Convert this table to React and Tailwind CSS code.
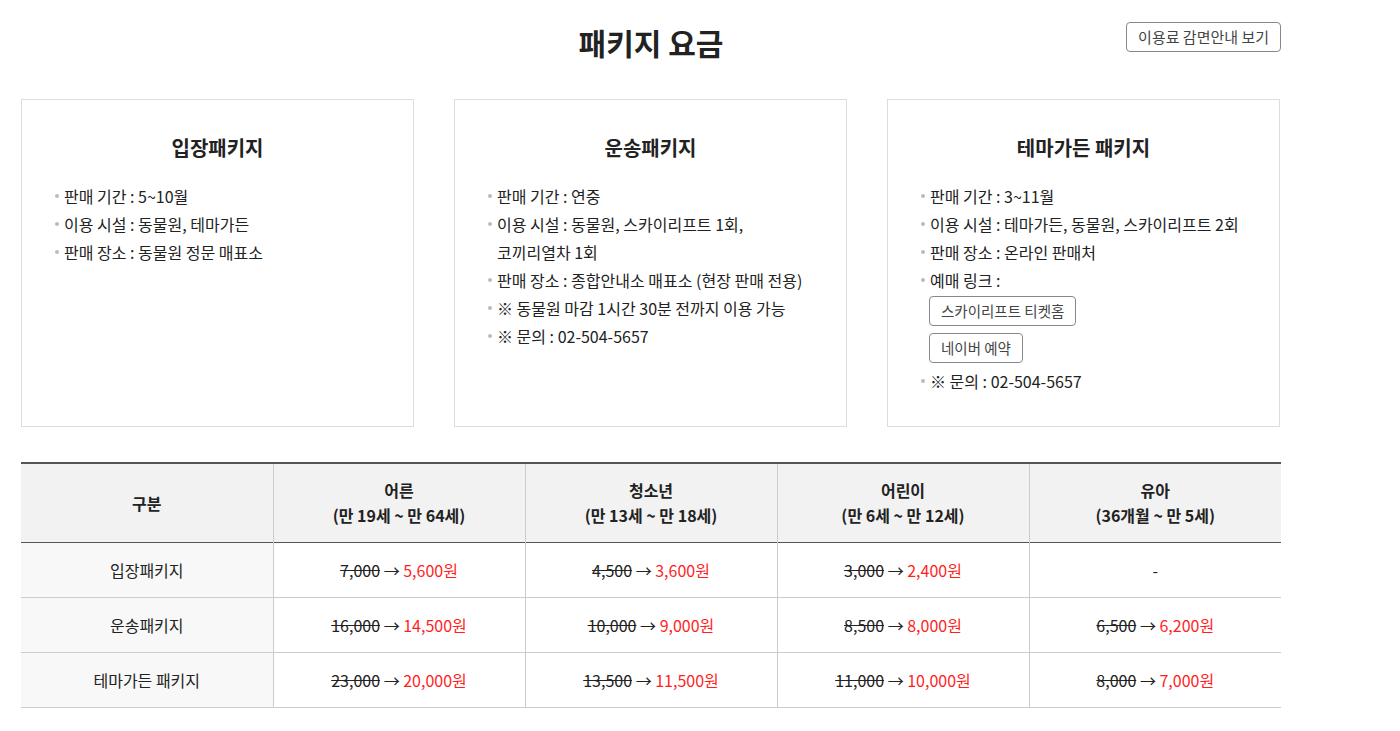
import React from 'react'

const packages = [
    {
        title: '입장패키지',
        items: ['판매 기간 : 5~10월', '이용 시설 : 동물원, 테마가든', '판매 장소 : 동물원 정문 매표소'],
    },
    {
        title: '운송패키지',
        items: [
            '판매 기간 : 연중',
            '이용 시설 : 동물원, 스카이리프트 1회, 코끼리열차 1회',
            '판매 장소 : 종합안내소 매표소 (현장 판매 전용)',
            '※ 동물원 마감 1시간 30분 전까지 이용 가능',
            '※ 문의 : 02-504-5657',
        ],
    },
    {
        title: '테마가든 패키지',
        items: ['판매 기간 : 3~11월', '이용 시설 : 테마가든, 동물원, 스카이리프트 2회', '판매 장소 : 온라인 판매처'],
        links: ['스카이리프트 티켓홈', '네이버 예약'],
        after: ['※ 문의 : 02-504-5657'],
    },
]

const rows = [
    { name: '입장패키지', prices: [['7,000', '5,600원'], ['4,500', '3,600원'], ['3,000', '2,400원'], null] },
    { name: '운송패키지', prices: [['16,000', '14,500원'], ['10,000', '9,000원'], ['8,500', '8,000원'], ['6,500', '6,200원']] },
    { name: '테마가든 패키지', prices: [['23,000', '20,000원'], ['13,500', '11,500원'], ['11,000', '10,000원'], ['8,000', '7,000원']] },
]

const heads = [
    ['어른', '(만 19세 ~ 만 64세)'],
    ['청소년', '(만 13세 ~ 만 18세)'],
    ['어린이', '(만 6세 ~ 만 12세)'],
    ['유아', '(36개월 ~ 만 5세)'],
]

function Item({ text }) {
    return (
        <li className="flex leading-[28px]">
            <span className="w-[9px] shrink-0 flex items-center h-[28px]">
                <span className="w-[4px] h-[4px] rounded-full bg-[#bbb]" />
            </span>
            <span className="break-keep">{text}</span>
        </li>
    )
}

function App() {
    return (
        <div className="min-h-screen bg-white text-[#222]" style={{ fontFamily: '"Noto Sans CJK KR", "Noto Sans", sans-serif' }}>
            <div className="w-[1260px] ml-[21px] pt-[22px] pb-10">
                {/* Header */}
                <div className="grid grid-cols-[1fr_auto_1fr] items-start">
                    <div />
                    <h1 className="text-[30px] font-bold leading-[40px]">패키지 요금</h1>
                    <div className="flex justify-end">
                        <button className="h-[30px] px-[11px] border border-[#888] rounded-[4px] text-[15px] text-[#444] bg-white">
                            이용료 감면안내 보기
                        </button>
                    </div>
                </div>

                {/* Cards */}
                <div className="mt-[37px] grid grid-cols-3 gap-[40px] pr-[1px]">
                    {packages.map((p) => (
                        <div key={p.title} className="border border-[#ddd] pt-[35px] pb-[31px] px-[33px]">
                            <h2 className="text-center text-[20px] font-bold leading-[26px]">{p.title}</h2>
                            <ul className="mt-[21px] text-[16px]">
                                {p.items.map((t) => <Item key={t} text={t} />)}
                                {p.links && (
                                    <>
                                        <Item text="예매 링크 :" />
                                        <li className="pl-[8px] pt-[2px] pb-[4px] flex flex-col items-start gap-[7px]">
                                            {p.links.map((l) => (
                                                <button key={l} className="h-[30px] px-[11px] border border-[#888] rounded-[4px] text-[14.5px] text-[#444] bg-white">
                                                    {l}
                                                </button>
                                            ))}
                                        </li>
                                    </>
                                )}
                                {p.after && p.after.map((t) => <Item key={t} text={t} />)}
                            </ul>
                        </div>
                    ))}
                </div>

                {/* Price table */}
                <table className="mt-[35px] w-full table-fixed border-collapse text-[16px] text-center">
                    <thead>
                        <tr className="bg-[#f2f2f2] border-t-2 border-t-[#555] border-b border-b-[#555]">
                            <th className="h-[79px] font-bold border-r border-[#ccc]">구분</th>
                            {heads.map((h, i) => (
                                <th key={h[0]} className={`h-[79px] font-bold leading-[25px] ${i < 3 ? 'border-r border-[#ccc]' : ''}`}>
                                    {h[0]}<br />{h[1]}
                                </th>
                            ))}
                        </tr>
                    </thead>
                    <tbody>
                        {rows.map((r) => (
                            <tr key={r.name} className="border-b border-[#ccc]">
                                <td className="h-[55px] bg-[#f8f8f8] border-r border-[#ccc]">{r.name}</td>
                                {r.prices.map((p, i) => (
                                    <td key={i} className={`h-[55px] ${i < 3 ? 'border-r border-[#ccc]' : ''}`}>
                                        {p ? (
                                            <>
                                                <span className="line-through">{p[0]}</span>
                                                <span> → </span>
                                                <span className="text-[#ff1f1f]">{p[1]}</span>
                                            </>
                                        ) : '-'}
                                    </td>
                                ))}
                            </tr>
                        ))}
                    </tbody>
                </table>
            </div>
        </div>
    )
}

export default App
